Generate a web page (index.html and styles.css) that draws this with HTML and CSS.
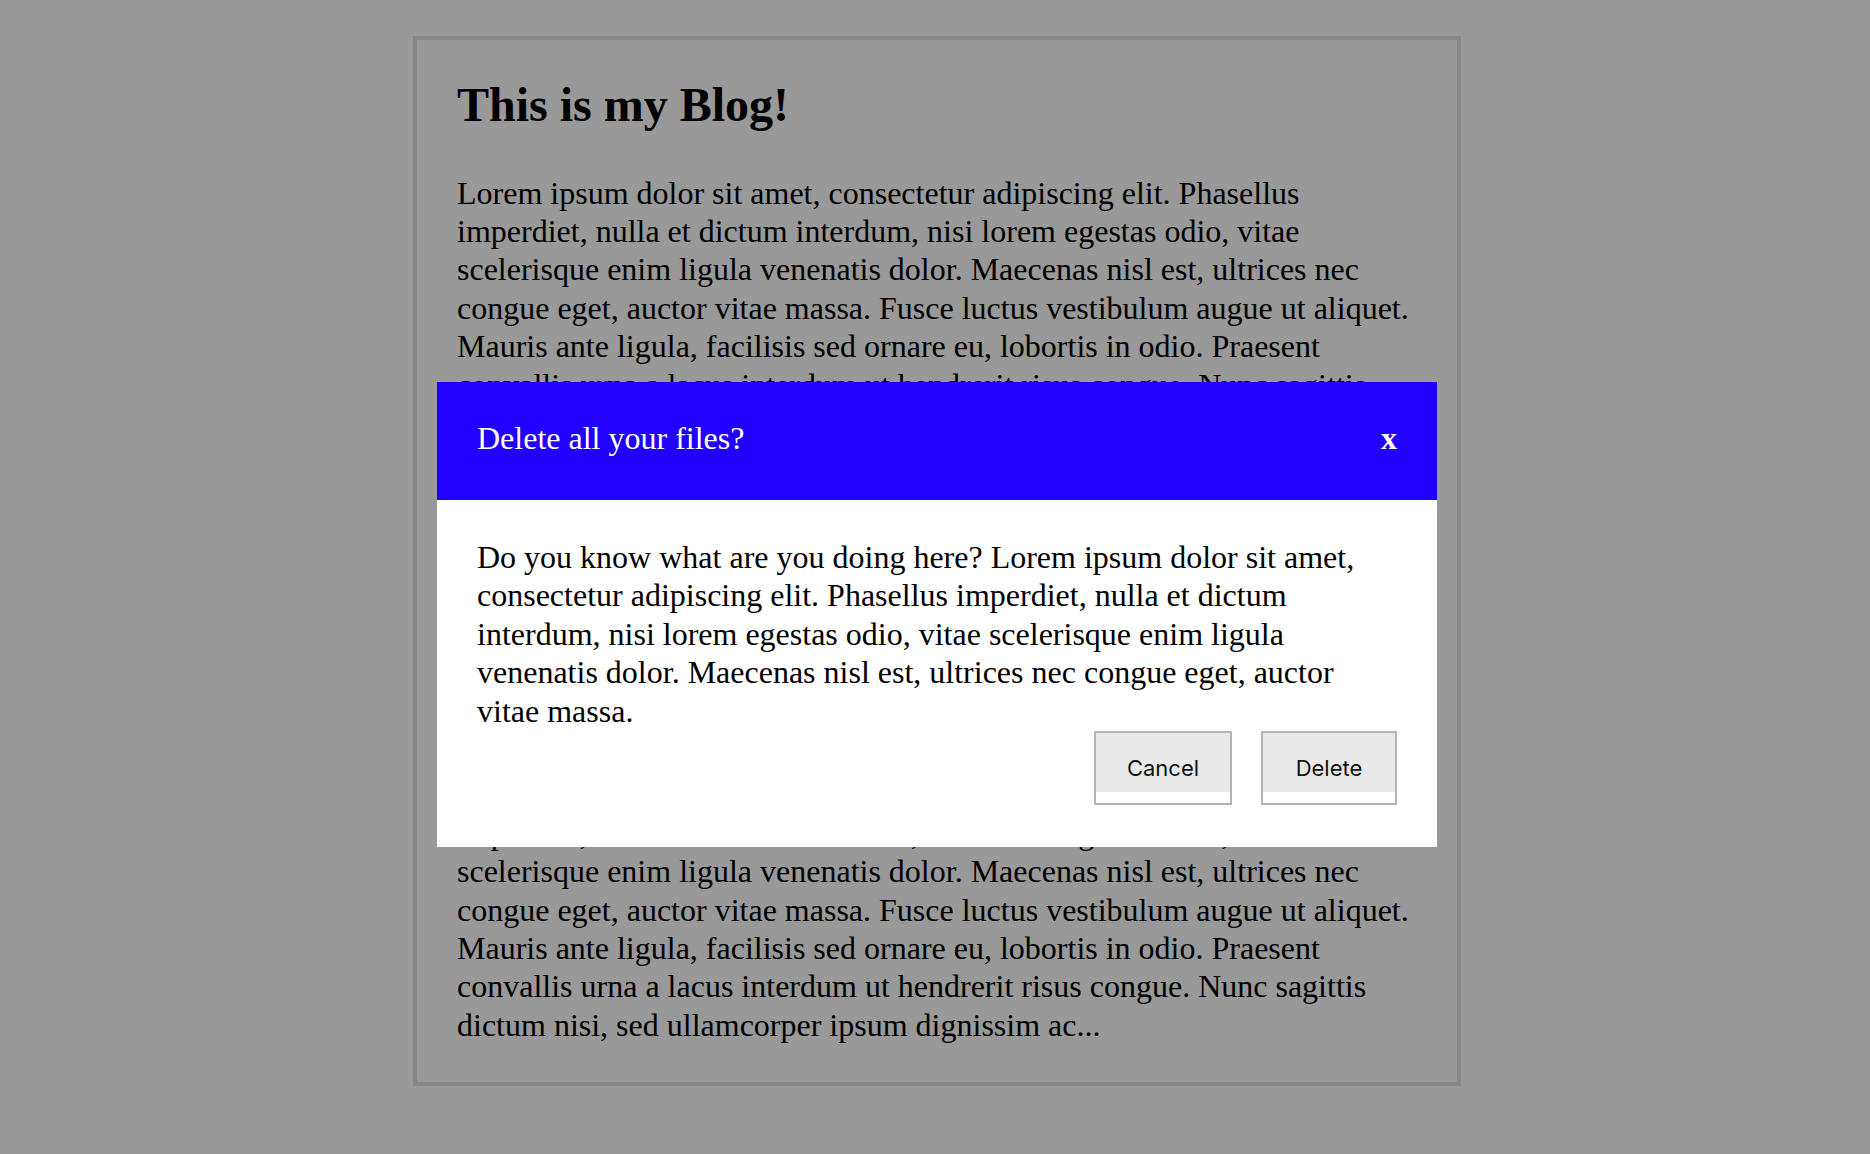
FILE: index.html
```html
<!DOCTYPE html>
<html lang="en">
<head>
<meta charset="utf-8">
<title>This is my Blog!</title>
<link rel="stylesheet" href="styles.css">
</head>
<body>
<div class="page">
  <article class="blog">
    <h1 class="blog-title">This is my Blog!</h1>
    <p class="blog-text">Lorem ipsum dolor sit amet, consectetur adipiscing elit. Phasellus imperdiet, nulla et dictum interdum, nisi lorem egestas odio, vitae scelerisque enim ligula venenatis dolor. Maecenas nisl est, ultrices nec congue eget, auctor vitae massa. Fusce luctus vestibulum augue ut aliquet. Mauris ante ligula, facilisis sed ornare eu, lobortis in odio. Praesent convallis urna a lacus interdum ut hendrerit risus congue. Nunc sagittis dictum nisi, sed ullamcorper ipsum dignissim ac...</p>
    <p class="blog-text">Lorem ipsum dolor sit amet, consectetur adipiscing elit. Phasellus imperdiet, nulla et dictum interdum, nisi lorem egestas odio, vitae scelerisque enim ligula venenatis dolor. Maecenas nisl est, ultrices nec congue eget, auctor vitae massa. Fusce luctus vestibulum augue ut aliquet. Mauris ante ligula, facilisis sed ornare eu, lobortis in odio. Praesent convallis urna a lacus interdum ut hendrerit risus congue. Nunc sagittis dictum nisi, sed ullamcorper ipsum dignissim ac...</p>
    <p class="blog-text">Lorem ipsum dolor sit amet, consectetur adipiscing elit. Phasellus imperdiet, nulla et dictum interdum, nisi lorem egestas odio, vitae scelerisque enim ligula venenatis dolor. Maecenas nisl est, ultrices nec congue eget, auctor vitae massa. Fusce luctus vestibulum augue ut aliquet. Mauris ante ligula, facilisis sed ornare eu, lobortis in odio. Praesent convallis urna a lacus interdum ut hendrerit risus congue. Nunc sagittis dictum nisi, sed ullamcorper ipsum dignissim ac...</p>
  </article>
</div>

<div class="modal" role="dialog" aria-labelledby="modal-title">
  <div class="modal-header">
    <h2 class="modal-title" id="modal-title">Delete all your files?</h2>
    <span class="modal-close">x</span>
  </div>
  <div class="modal-body">
    <p class="modal-text">Do you know what are you doing here? Lorem ipsum dolor sit amet, consectetur adipiscing elit. Phasellus imperdiet, nulla et dictum interdum, nisi lorem egestas odio, vitae scelerisque enim ligula venenatis dolor. Maecenas nisl est, ultrices nec congue eget, auctor vitae massa.</p>
    <div class="modal-actions">
      <button class="btn btn-cancel" type="button">Cancel</button>
      <button class="btn btn-delete" type="button">Delete</button>
    </div>
  </div>
</div>
</body>
</html>
```

FILE: styles.css
```css
html, body {
  margin: 0;
  padding: 0;
}

body {
  background: #999999;
  font-family: "Liberation Serif", "Times New Roman", serif;
  color: #000;
  min-height: 1154px;
  overflow: hidden;
}

.page {
  display: flex;
  justify-content: center;
  padding: 36px 0 0 4px;
}

.blog {
  box-sizing: border-box;
  width: 1048px;
  border: 4px solid #868686;
  padding: 36px 40px 38px;
}

.blog-title {
  margin: 0 0 40px;
  font-size: 48px;
  line-height: 57.6px;
  font-weight: bold;
}

.blog-text {
  margin: 0 0 32px;
  font-size: 32px;
  line-height: 38.4px;
}

.blog-text:last-child {
  margin-bottom: 0;
}

.modal {
  position: fixed;
  top: 382px;
  left: calc(50% - 498px);
  width: 1000px;
  background: #ffffff;
}

.modal-header {
  box-sizing: border-box;
  height: 118px;
  background: #2200ff;
  color: #ffffff;
  display: flex;
  justify-content: space-between;
  align-items: flex-start;
  padding: 37px 40px 0;
}

.modal-title {
  margin: 0;
  font-size: 32px;
  line-height: 38.4px;
  font-weight: normal;
}

.modal-close {
  font-size: 32px;
  line-height: 38.4px;
  font-weight: bold;
}

.modal-body {
  padding: 38px 40px 42px;
}

.modal-text {
  margin: 0;
  font-size: 32px;
  line-height: 38.4px;
}

.modal-actions {
  display: flex;
  justify-content: flex-end;
  gap: 29px;
  margin-top: 1px;
}

.btn {
  box-sizing: border-box;
  height: 74px;
  padding: 0;
  border: 2px solid #b4b4b4;
  border-radius: 0;
  background: linear-gradient(to bottom, #e9e9e9 0, #e9e9e9 59px, #ffffff 59px);
  font-family: Inter, "Liberation Sans", sans-serif;
  font-size: 22px;
  color: #111111;
}

.btn-cancel {
  width: 138px;
}

.btn-delete {
  width: 136px;
}
```
